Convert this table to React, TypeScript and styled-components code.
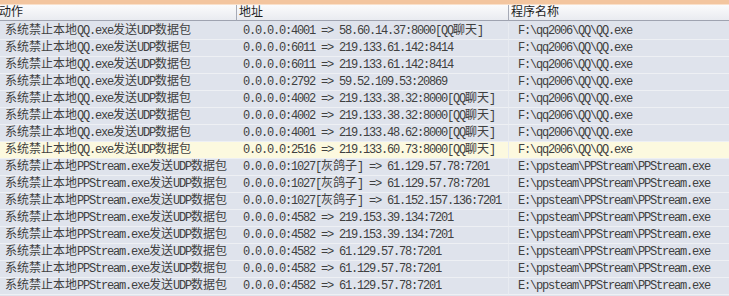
import React from "react";
import styled, {createGlobalStyle} from "styled-components";

type Entry = {
    action: string
    address: string
    program: string
}

const qq = "系统禁止本地QQ.exe发送UDP数据包"
const pps = "系统禁止本地PPStream.exe发送UDP数据包"
const qqPath = "F:\\qq2006\\QQ\\QQ.exe"
const ppsPath = "E:\\ppsteam\\PPStream\\PPStream.exe"

const entries: Entry[] = [
    {action: qq, address: "0.0.0.0:4001 => 58.60.14.37:8000[QQ聊天]", program: qqPath},
    {action: qq, address: "0.0.0.0:6011 => 219.133.61.142:8414", program: qqPath},
    {action: qq, address: "0.0.0.0:6011 => 219.133.61.142:8414", program: qqPath},
    {action: qq, address: "0.0.0.0:2792 => 59.52.109.53:20869", program: qqPath},
    {action: qq, address: "0.0.0.0:4002 => 219.133.38.32:8000[QQ聊天]", program: qqPath},
    {action: qq, address: "0.0.0.0:4002 => 219.133.38.32:8000[QQ聊天]", program: qqPath},
    {action: qq, address: "0.0.0.0:4001 => 219.133.48.62:8000[QQ聊天]", program: qqPath},
    {action: qq, address: "0.0.0.0:2516 => 219.133.60.73:8000[QQ聊天]", program: qqPath},
    {action: pps, address: "0.0.0.0:1027[灰鸽子] => 61.129.57.78:7201", program: ppsPath},
    {action: pps, address: "0.0.0.0:1027[灰鸽子] => 61.129.57.78:7201", program: ppsPath},
    {action: pps, address: "0.0.0.0:1027[灰鸽子] => 61.152.157.136:7201", program: ppsPath},
    {action: pps, address: "0.0.0.0:4582 => 219.153.39.134:7201", program: ppsPath},
    {action: pps, address: "0.0.0.0:4582 => 219.153.39.134:7201", program: ppsPath},
    {action: pps, address: "0.0.0.0:4582 => 61.129.57.78:7201", program: ppsPath},
    {action: pps, address: "0.0.0.0:4582 => 61.129.57.78:7201", program: ppsPath},
    {action: pps, address: "0.0.0.0:4582 => 61.129.57.78:7201", program: ppsPath},
]

const GlobalStyle = createGlobalStyle`
  body {
    margin: 0;
    background: #dfe3ec;
    font-family: "Liberation Mono", "Noto Sans CJK SC", monospace;
    font-size: 12px;
  }
`

const List = styled.div`
  width: 729px;
  height: 296px;
  overflow: hidden;
  background: #dfe3ec;
`

const TopStrip = styled.div`
  height: 4px;
  background: #f3c59f;
  border-bottom: 1px solid #f9e0cb;
`

const Grid = styled.div`
  display: grid;
  grid-template-columns: 236px 272px 1fr;
`

const HeaderCell = styled.div<{$first?: boolean}>`
  height: 15px;
  line-height: 17px;
  padding-left: ${p => p.$first ? "0" : "2px"};
  margin-left: ${p => p.$first ? "-1px" : "0"};
  border-left: ${p => p.$first ? "none" : "1px solid #a6aab6"};
  border-bottom: 1px solid #9fa3b0;
  background: linear-gradient(#fbfbfc, #e9ebf0);
  color: #1e1e1e;
  white-space: nowrap;
  overflow: hidden;
`

const Cell = styled.div<{$active?: boolean, $pad: number, $line?: boolean}>`
  height: 16px;
  line-height: 17px;
  padding-left: ${p => p.$pad}px;
  border-bottom: 1px solid #eef0f4;
  border-left: ${p => p.$line ? "1px solid #e8ebf1" : "none"};
  background: ${p => p.$active ? "#fcf9df" : "#dfe3ec"};
  color: #404040;
  white-space: nowrap;
  overflow: hidden;
`

const Latin = styled.span`
  letter-spacing: -1.2px;
`

const Spacer = styled.div`
  grid-column: 1 / 4;
  height: 2px;
`

// split text into ascii runs (narrow) and cjk runs
function Mixed({text}: {text: string}) {
    const parts = text.match(/[\x00-\x7f]+|[^\x00-\x7f]+/g) || []
    return (
        <>
            {parts.map((part, i) =>
                /^[\x00-\x7f]/.test(part) ? <Latin key={i}>{part}</Latin> : <span key={i}>{part}</span>
            )}
        </>
    )
}

function App() {
    return (
        <List>
            <GlobalStyle/>
            <TopStrip/>
            <Grid>
                <HeaderCell $first>动作</HeaderCell>
                <HeaderCell>地址</HeaderCell>
                <HeaderCell>程序名称</HeaderCell>
                <Spacer/>
                {entries.map((e, index) => (
                    <React.Fragment key={index}>
                        <Cell $pad={5} $active={index === 7}><Mixed text={e.action}/></Cell>
                        <Cell $pad={7} $active={index === 7}><Mixed text={e.address}/></Cell>
                        <Cell $pad={9} $line $active={index === 7}><Mixed text={e.program}/></Cell>
                    </React.Fragment>
                ))}
            </Grid>
        </List>
    )
}

export default App
